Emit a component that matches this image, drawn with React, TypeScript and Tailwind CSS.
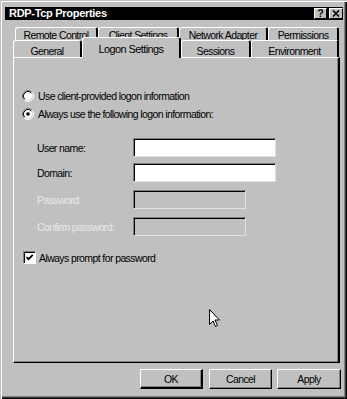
import React from "react";

function Radio({ checked }: { checked?: boolean }) {
  return (
    <svg width="12" height="12" viewBox="0 0 12 12" className="shrink-0">
      <circle cx="6" cy="6" r="4.5" fill="#fff" />
      <path d="M2.11 9.89 A5.5 5.5 0 0 1 9.89 2.11" fill="none" stroke="#808080" />
      <path d="M9.89 2.11 A5.5 5.5 0 0 1 2.11 9.89" fill="none" stroke="#fff" />
      <path d="M2.82 9.18 A4.5 4.5 0 0 1 9.18 2.82" fill="none" stroke="#000" />
      <path d="M9.18 2.82 A4.5 4.5 0 0 1 2.82 9.18" fill="none" stroke="#dfdfdf" />
      {checked && <circle cx="6" cy="6" r="1.8" fill="#000" />}
    </svg>
  );
}

function Tab({ label, className }: { label: string; className: string }) {
  return (
    <div
      className={`flex justify-center bg-[#c0c0c0] border-t border-l border-white border-r-2 border-r-black rounded-t-[3px] ${className}`}
    >
      {label}
    </div>
  );
}

function Field({ label, width, disabled }: { label: string; width: string; disabled?: boolean }) {
  return (
    <div className="flex items-center h-[19px] ml-[15px]">
      <div className={`w-[96px] ${disabled ? "text-[#e8e8e8]" : "text-black"}`}>{label}</div>
      <div
        className={`h-[19px] ${width} border border-t-[#808080] border-l-[#808080] border-b-[#e0e0e0] border-r-[#e0e0e0] shadow-[inset_1px_1px_0_#000] ${
          disabled ? "bg-[#c0c0c0]" : "bg-white"
        }`}
      />
    </div>
  );
}

function Button({ label, className }: { label: string; className: string }) {
  return (
    <div
      className={`h-[20px] flex items-center justify-center bg-[#c0c0c0] border border-t-white border-l-white border-b-black border-r-black shadow-[inset_-1px_-1px_0_#808080] ${className}`}
    >
      {label}
    </div>
  );
}

export default function App() {
  return (
    <div className="relative w-[347px] h-[399px] bg-[#c0c0c0] pt-[7px] pl-[5px] pr-[4px] font-['Liberation_Sans',Arial,sans-serif] text-[10.5px] leading-[12px] tracking-[-0.6px] text-black shadow-[inset_1px_1px_0_#c0c0c0,inset_2px_2px_0_#fff,inset_-1px_-1px_0_#000,inset_-2px_-2px_0_#404040,inset_-3px_-3px_0_#808080] overflow-hidden">
      {/* title bar */}
      <div className="flex items-start justify-between h-[13px] bg-black pl-[4px]">
        <span className="text-white font-bold text-[11px] leading-[13px] tracking-[-0.3px]">RDP-Tcp Properties</span>
        <div className="flex gap-[2px] mt-[1px]">
          <div className="w-[13px] h-[11px] flex items-center justify-center bg-[#c0c0c0] border border-t-white border-l-white border-b-black border-r-black font-bold text-[10px] leading-[10px] tracking-normal">
            ?
          </div>
          <div className="w-[14px] h-[11px] flex items-center justify-center bg-[#c0c0c0] border border-t-white border-l-white border-b-black border-r-black">
            <svg width="8" height="7" viewBox="0 0 8 7">
              <path d="M1 0.5 L7 6.5 M7 0.5 L1 6.5" stroke="#000" strokeWidth="1.6" />
            </svg>
          </div>
        </div>
      </div>

      {/* tabs */}
      <div className="ml-[8px] w-[327px] mt-[7px]">
        <div className="flex h-[16px] pl-[2px]">
          <Tab label="Remote Control" className="w-[83px] h-[16px] pt-[1px]" />
          <Tab label="Client Settings" className="w-[81px] h-[16px] pt-[1px]" />
          <Tab label="Network Adapter" className="w-[89px] h-[16px] pt-[1px]" />
          <Tab label="Permissions" className="w-[71px] h-[16px] pt-[1px]" />
        </div>
        <div className="relative flex items-end h-[20px] mt-[-6px]">
          <Tab label="General" className="w-[69px] h-[17px] pt-[4px]" />
          <Tab label="Logon Settings" className="relative z-10 w-[99px] h-[21px] mb-[-1px] pt-[5px] text-[11px]" />
          <Tab label="Sessions" className="w-[70px] h-[17px] pt-[4px]" />
          <Tab label="Environment" className="w-[88px] h-[17px] pt-[4px]" />
        </div>

        {/* panel */}
        <div className="h-[306px] border-t border-l border-white border-r-2 border-b border-r-black border-b-black shadow-[inset_-1px_-1px_0_#808080] pt-[31px] pl-[8px]">
          <div className="flex items-center h-[13px] gap-[4px]">
            <Radio />
            <span>Use client-provided logon information</span>
          </div>
          <div className="flex items-center h-[13px] gap-[4px] mt-[5px]">
            <Radio checked />
            <span>Always use the following logon information:</span>
          </div>

          <div className="mt-[18px]">
            <Field label="User name:" width="w-[143px]" />
          </div>
          <div className="mt-[6px]">
            <Field label="Domain:" width="w-[143px]" />
          </div>
          <div className="mt-[8px]">
            <Field label="Password:" width="w-[113px]" disabled />
          </div>
          <div className="mt-[8px]">
            <Field label="Confirm password:" width="w-[113px]" disabled />
          </div>

          <div className="flex items-center h-[13px] gap-[3px] mt-[15px] ml-[1px]">
            <div className="w-[13px] h-[13px] shrink-0 bg-white border border-t-[#808080] border-l-[#808080] border-b-white border-r-white shadow-[inset_1px_1px_0_#000] flex items-center justify-center">
              <svg width="9" height="9" viewBox="0 0 9 9">
                <path d="M1.5 4 L3.5 6.2 L7.8 1.8" fill="none" stroke="#000" strokeWidth="1.8" />
              </svg>
            </div>
            <span>Always prompt for password</span>
          </div>
        </div>
      </div>

      {/* buttons */}
      <div className="flex justify-end gap-[5px] mt-[6px] pr-[2px]">
        <Button label="OK" className="w-[63px] mr-[1px] border-l-[#c0c0c0] border-b-2 border-r-2" />
        <Button label="Cancel" className="w-[63px]" />
        <Button label="Apply" className="w-[64px]" />
      </div>

      {/* mouse cursor */}
      <svg className="absolute left-[209px] top-[309px]" width="12" height="19" viewBox="0 0 12 19">
        <path d="M0.5 0.5 L0.5 15.5 L4 12 L6.5 17.5 L8.5 16.5 L6 11 L10.5 11 Z" fill="#fff" stroke="#000" strokeWidth="1" />
      </svg>
    </div>
  );
}
